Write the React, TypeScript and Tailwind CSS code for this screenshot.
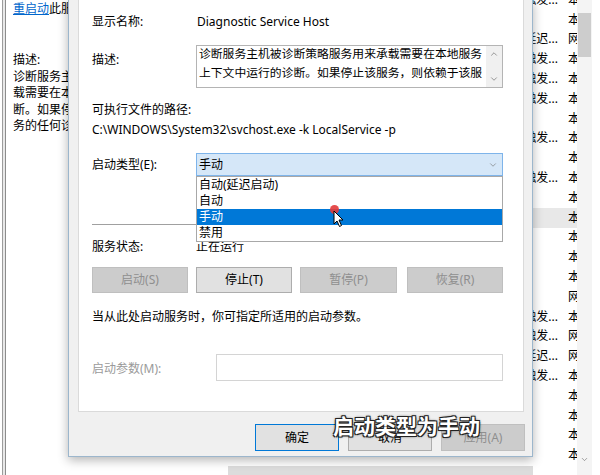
import { ChevronDown, ChevronUp } from "lucide-react";

// right-hand services list, only the last two columns peek out
const LIST_ROWS: [string, string][] = [
    ["手动(触发...", "本地系统"],
    ["", "本地系统"],
    ["自动(延迟...", "网络服务"],
    ["手动(触发...", "本地系统"],
    ["手动(触发...", "本地系统"],
    ["手动(触发...", "本地系统"],
    ["", "本地系统"],
    ["手动(触发...", "本地系统"],
    ["", "本地系统"],
    ["手动(触发...", "本地系统"],
    ["", "本地系统"],
    ["", "本地系统"],
    ["", "本地系统"],
    ["", "本地系统"],
    ["", "本地系统"],
    ["", "网络服务"],
    ["手动(触发...", "本地系统"],
    ["手动(触发...", "网络服务"],
    ["自动(延迟...", "网络服务"],
    ["手动(触发...", "本地系统"],
    ["", "本地系统"],
    ["", "本地系统"],
    ["", "本地系统"],
    ["", "本地系统"],
];

const START_TYPES = ["自动(延迟启动)", "自动", "手动", "禁用"];

function WinButton({ label, disabled, width, focused }: { label: string; disabled?: boolean; width: string; focused?: boolean }) {
    return (
        <div
            className={
                "flex items-center justify-center border " +
                width +
                (disabled
                    ? " border-[#bfbfbf] bg-[#cccccc] text-[#8f8f8f]"
                    : focused
                        ? " border-[#0078d7] bg-[#e1e1e1] text-black"
                        : " border-[#adadad] bg-[#e1e1e1] text-black")
            }
        >
            {label}
        </div>
    );
}

export default function App() {
    return (
        <div className="relative flex h-[475px] w-[600px] overflow-hidden bg-white text-[12px] leading-4 text-black font-['Noto_Sans','Noto_Sans_CJK_SC',sans-serif]">
            {/* outer window frame */}
            <div className="flex w-[8px] shrink-0">
                <div className="w-[2px] bg-white" />
                <div className="w-[1px] bg-[#9c9c9c]" />
                <div className="w-[2px] bg-[#e8e8e8]" />
                <div className="w-[1px] bg-[#8c8c8c]" />
                <div className="w-[2px] bg-white" />
            </div>

            {/* left description pane */}
            <div className="w-[60px] shrink-0 overflow-hidden whitespace-nowrap pl-[5px]">
                <div className="mt-[1px]">
                    <span className="text-[#0066cc] underline">重启动</span>此服务
                </div>
                <div className="mt-[35px] leading-[16.5px]">
                    <div>描述:</div>
                    <div>诊断服务主机被诊断策略服务用来承</div>
                    <div>载需要在本地服务上下文中运行的诊</div>
                    <div>断。如果停止该服务，则依赖于该服</div>
                    <div>务的任何诊断将不再运行。</div>
                </div>
            </div>

            {/* properties dialog */}
            <div className="flex w-[465px] shrink-0 flex-col">
                <div className="relative z-10 flex h-[458px] flex-col border-x border-b border-[#9cb6cc] bg-[#f0f0f0] shadow-[0_3px_10px_rgba(0,0,0,0.3)]">
                    <div className="ml-[9px] mr-[8px] flex-1 border-x border-b border-[#dadada] bg-white pl-[13px]">
                        <div className="mt-[14px] flex h-[16px] items-center">
                            <div className="w-[104px]">显示名称:</div>
                            <div className="pl-[1px]">Diagnostic Service Host</div>
                        </div>

                        <div className="mt-[15px] flex">
                            <div className="w-[104px] pt-[7px]">描述:</div>
                            <div className="flex h-[43px] w-[307px] border border-[#b4b4b4]">
                                <div className="flex-1 overflow-hidden whitespace-nowrap pl-[2px] text-[11.8px]">
                                    <div className="-mt-[2px] leading-[19px]">
                                        <div>诊断服务主机被诊断策略服务用来承载需要在本地服务</div>
                                        <div>上下文中运行的诊断。如果停止该服务，则依赖于该服</div>
                                    </div>
                                </div>
                                <div className="flex w-[16px] flex-col items-center justify-between bg-[#f0f0f0] py-[3px] text-[#606060]">
                                    <ChevronUp size={10} strokeWidth={1.5} />
                                    <ChevronDown size={10} strokeWidth={1.5} />
                                </div>
                            </div>
                        </div>

                        <div className="mt-[12px] leading-5">
                            <div>可执行文件的路径:</div>
                            <div>C:\WINDOWS\System32\svchost.exe -k LocalService -p</div>
                        </div>

                        <div className="mt-[13px] flex items-center">
                            <div className="w-[104px]">启动类型(E):</div>
                            <div className="relative h-[23px] w-[307px]">
                                <div className="flex h-full items-center justify-between border border-[#7eb4ea] bg-[#d5e7f8] pl-[2px] pr-[4px]">
                                    <span>手动</span>
                                    <ChevronDown size={10} strokeWidth={1.5} className="text-[#707070]" />
                                </div>
                                <div className="absolute left-0 top-full z-20 w-full border border-[#a8a8a8] bg-white">
                                    {START_TYPES.map((t) => (
                                        <div
                                            key={t}
                                            className={
                                                t === "手动"
                                                    ? "flex h-[16px] items-center bg-[#0078d7] pl-[2px] text-white"
                                                    : "flex h-[16px] items-center pl-[2px]"
                                            }
                                        >
                                            {t}
                                        </div>
                                    ))}
                                </div>
                            </div>
                        </div>

                        <div className="mt-[48px] h-[1px] w-[411px] bg-[#a0a0a0]" />

                        <div className="mt-[14px] flex h-[16px] items-center">
                            <div className="w-[104px]">服务状态:</div>
                            <div>正在运行</div>
                        </div>

                        <div className="mt-[12px] flex h-[26px]">
                            <WinButton label="启动(S)" disabled width="w-[96px]" />
                            <div className="w-[8px]" />
                            <WinButton label="停止(T)" width="w-[96px]" />
                            <div className="w-[8px]" />
                            <WinButton label="暂停(P)" disabled width="w-[97px]" />
                            <div className="w-[10px]" />
                            <WinButton label="恢复(R)" disabled width="w-[96px]" />
                        </div>

                        <div className="mt-[16px] h-[16px]">当从此处启动服务时，你可指定所适用的启动参数。</div>

                        <div className="mt-[29px] flex items-center">
                            <div className="w-[124px] pt-[3px] text-[#9a9a9a]">启动参数(M):</div>
                            <div className="h-[27px] w-[287px] border border-[#d4d4d4] bg-white" />
                        </div>
                    </div>

                    <div className="flex h-[44px] shrink-0 pl-[186px] pt-[12px]">
                        <div className="flex h-[27px]">
                            <WinButton label="确定" focused width="w-[84px]" />
                            <div className="w-[9px]" />
                            <WinButton label="取消" width="w-[84px]" />
                            <div className="w-[9px]" />
                            <WinButton label="应用(A)" disabled width="w-[84px]" />
                        </div>
                    </div>
                </div>
                <div className="flex-1 bg-white pl-[160px] pt-[9px]">
                    <div className="h-[9px] bg-[#dcdcdc]" />
                </div>
            </div>

            {/* services list behind the dialog */}
            <div className="flex w-[67px] shrink-0">
                <div className="-mt-[10px] w-[44px] overflow-hidden">
                    {LIST_ROWS.map(([type, logon], i) => (
                        <div key={i} className={"flex h-[19.8px] items-center" + (i === 11 ? " bg-[#e8e8e8]" : "")}>
                            <div className="flex w-[25px] justify-end overflow-hidden whitespace-nowrap">{type}</div>
                            <div className="ml-[10px] w-[9px] overflow-hidden whitespace-nowrap">{logon}</div>
                        </div>
                    ))}
                </div>
                <div className="flex w-[15px] flex-col bg-[#f4f4f4]">
                    <div className="mx-[1px] mt-[13px] h-[44px] bg-[#cdcdcd]" />
                    <div className="flex-1" />
                    <div className="flex justify-center pb-[11px] text-[#606060]">
                        <ChevronDown size={9} strokeWidth={1.5} />
                    </div>
                </div>
                <div className="w-[8px] bg-white" />
            </div>

            {/* recording overlays: click marker, pointer, caption */}
            <div className="absolute left-[330px] top-[205px] z-30 h-[9px] w-[9px] rounded-full bg-[#e23a3a] opacity-90" />
            <svg className="absolute left-[333px] top-[210px] z-30" width="12" height="18" viewBox="0 0 12 18">
                <path d="M1 1 L1 14 L4 11 L6.5 16.5 L8.5 15.5 L6 10 L10 10 Z" fill="#fff" stroke="#000" strokeWidth="1" strokeLinejoin="round" />
            </svg>
            <div className="absolute left-[333px] top-[416px] z-30 text-[21px] font-bold leading-none text-white [text-shadow:-1px_-1px_0_#222,1px_-1px_0_#222,-1px_1px_0_#222,1px_1px_0_#222,0_0_3px_#000]">
                启动类型为手动
            </div>
        </div>
    );
}
